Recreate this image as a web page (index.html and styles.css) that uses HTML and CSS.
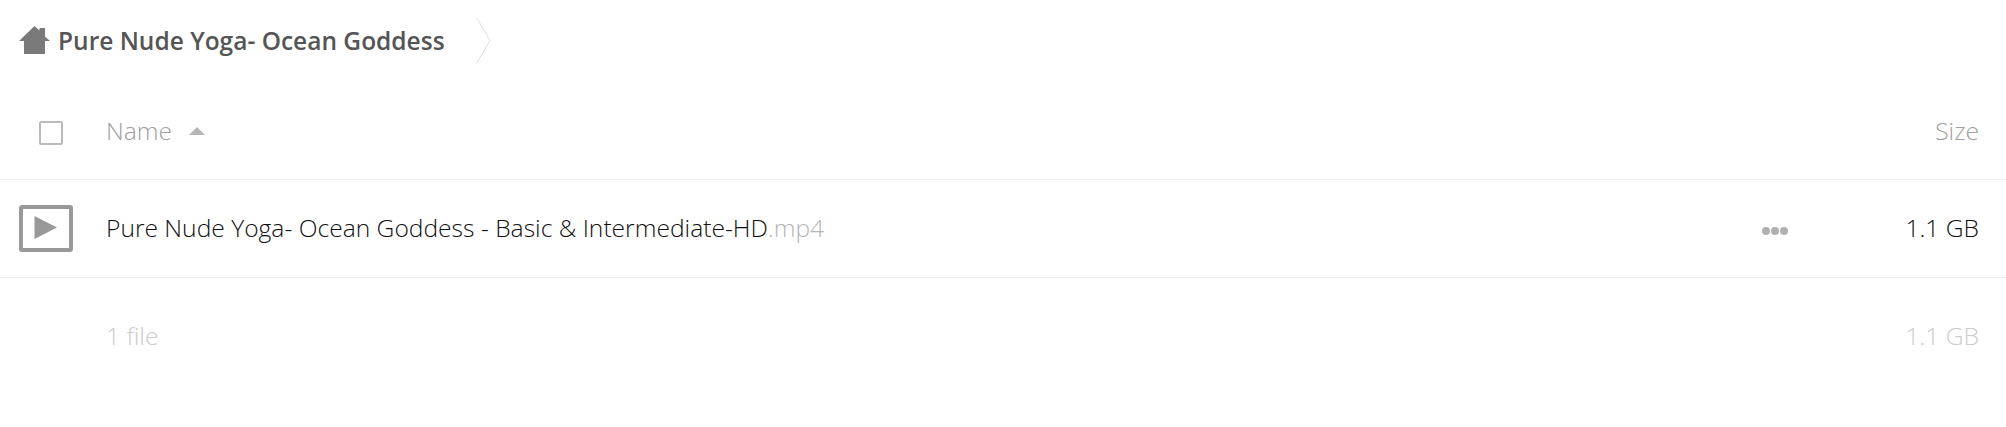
FILE: index.html
```html
<!DOCTYPE html>
<html lang="en">
<head>
<meta charset="utf-8">
<title>Pure Nude Yoga- Ocean Goddess</title>
<link rel="stylesheet" href="styles.css">
</head>
<body>
<nav class="crumbs">
  <svg class="home" viewBox="0 0 31 28" width="31" height="28"><path d="M0 15 15.500 0l5 4.500V2h5.500v8.500L31 15h-5v13H5V15z" fill="#7a7a7a"/></svg>
  <span class="crumb-title">Pure Nude Yoga- Ocean Goddess</span>
  <svg class="chev" viewBox="0 0 15 47" width="15" height="47"><path d="M0.500 0.500 14 23.500 0.500 46.500" fill="none" stroke="#ddd" stroke-width="1"/></svg>
</nav>
<div class="row head">
  <div class="lead"><span class="check"></span></div>
  <div class="name"><span>Name</span><span class="sort"></span></div>
  <div class="size">Size</div>
</div>
<div class="row file">
  <div class="lead">
    <svg class="thumb" viewBox="0 0 54 47" width="54" height="47"><rect x="2" y="2" width="50" height="43" rx="1" fill="#fff" stroke="#999" stroke-width="4"/><path d="M15.500 11v23L38 22.500z" fill="#999"/></svg>
  </div>
  <div class="name file-name"><span class="base">Pure Nude Yoga- Ocean Goddess - Basic &amp; Intermediate-HD</span><span class="ext">.mp4</span></div>
  <div class="dots"><i></i><i></i><i></i></div>
  <div class="size file-size">1.1 GB</div>
</div>
<div class="row summary">
  <div class="lead"></div>
  <div class="name">1 file</div>
  <div class="size">1.1 GB</div>
</div>
</body>
</html>
```
FILE: styles.css
```css
* { box-sizing: border-box; }
html, body { margin: 0; background: #fff; }
body {
  font-family: "Open Sans", sans-serif;
  font-weight: 300;
  font-size: 24.6px;
  color: #111;
  overflow: hidden;
}
.crumbs {
  height: 82px;
  display: flex;
  align-items: center;
  padding-left: 19px;
}
.home { margin-right: 8px; margin-top: -2px; }
.crumb-title {
  font-weight: 600;
  font-size: 24.5px;
  color: #555;
  margin-top: -2px;
}
.chev { margin-left: 31px; margin-top: -1px; }
.row {
  display: flex;
  align-items: center;
  padding-right: 27px;
}
.lead {
  width: 106px;
  flex: none;
  display: flex;
  align-items: center;
  padding-left: 19px;
}
.name { flex: 1; display: flex; align-items: center; }
.size { text-align: right; }
.head {
  height: 98px;
  border-bottom: 1px solid #eee;
  color: #a0a0a0;
}
.check {
  display: block;
  width: 24px;
  height: 24px;
  margin: 4px 0 0 20px;
  border: 2px solid #bbb;
  border-radius: 2px;
}
.sort {
  width: 0;
  height: 0;
  margin-left: 17px;
  border: 8px solid transparent;
  border-top: 0;
  border-bottom: 8px solid #b5b5b5;
}
.file {
  height: 98px;
  border-bottom: 1px solid #eee;
}
.file-name, .file-size { margin-top: -2px; }
.ext { color: #b5b5b5; }
.dots { display: flex; gap: 1px; margin-right: 117px; padding-top: 4px; }
.dots i { display: block; width: 8px; height: 8px; border-radius: 50%; background: #b0b0b0; }
.summary {
  height: 114px;
  color: #ccc;
}
```
